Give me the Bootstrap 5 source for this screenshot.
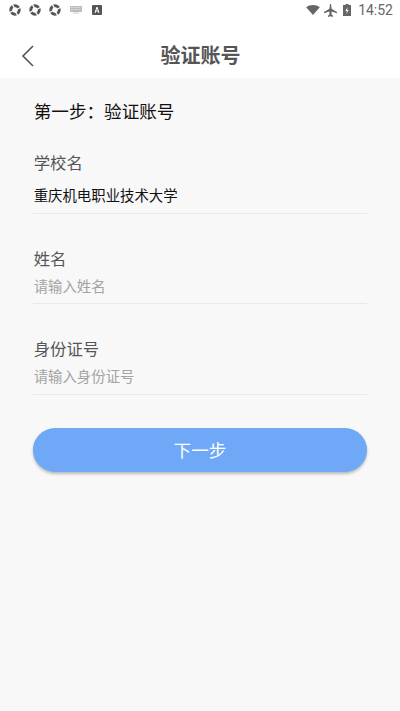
<!DOCTYPE html>
<html lang="zh"><head><meta charset="utf-8">
<link rel="stylesheet" href="https://cdn.jsdelivr.net/npm/bootstrap@5.3.0/dist/css/bootstrap.min.css">
<style>
html,body{height:100%}
body{background:#f8f8f8;font-family:"Noto Sans CJK SC","Liberation Sans",sans-serif;overflow:hidden}
.sbar{height:24px;background:#fff;padding:0 7px 4px 9px;color:#666}
.sbar svg{display:block}
.clock{font-family:Roboto,sans-serif;font-size:14px;color:#666;line-height:20px;margin-left:7px}
.ikey{margin-left:1px}
.iname{margin-left:2px}
.iair{margin-left:4px}
.ibat{margin-left:6px}
.tbar{height:54px;background:#fff}
.tbar h1{font-size:20px;font-weight:700;color:#555;margin:0;padding-left:1px;line-height:62px}
.backb{left:20px;top:19px;width:16px;height:26px}
.formwrap{padding:0 33px}
.steph{font-size:17.6px;color:#111;line-height:26px;padding-top:20px;margin:0 0 0 .7px}
.flabel{font-size:16.4px;color:#555;line-height:24px;display:block;margin:0 0 0 .7px}
.fval{font-size:14.4px;color:#111;line-height:20px;margin-left:.7px}
.fph{font-size:14.4px;color:#a3a3a3;line-height:20px;margin-left:.7px}
.frow{border-bottom:1px solid #e9e9e9}
.r1{margin-top:26px;padding-bottom:8px}
.r2{margin-top:32px;padding-bottom:7px}
.r3{margin-top:32px;padding-bottom:8px}
.nextb{margin-top:33px;height:44px;width:100%;border:0;border-radius:22px;background:#6fa8f7;color:#fff;font-size:17.6px;box-shadow:0 2px 3px rgba(0,0,0,.25)}
.nextb:hover,.nextb:active{background:#6fa8f7!important;color:#fff!important}
.lblgap{margin-bottom:11px}
.lblgap2{margin-bottom:6px}
</style></head>
<body>
<div class="sbar d-flex align-items-center justify-content-between">
  <div class="d-flex align-items-center" style="gap:8px">
    <svg width="12" height="12" viewBox="0 0 12 12"><circle cx="6" cy="6" r="4.200" fill="none" stroke="#555" stroke-width="3"/><path d="M3 0l2.500 4.200M12 3L7.800 5.500M9 12L6.500 7.800M0 9l4.200-2.500" stroke="#fff" stroke-width="1.300"/></svg>
    <svg width="12" height="12" viewBox="0 0 12 12"><circle cx="6" cy="6" r="4.200" fill="none" stroke="#555" stroke-width="3"/><path d="M3 0l2.500 4.200M12 3L7.800 5.500M9 12L6.500 7.800M0 9l4.200-2.500" stroke="#fff" stroke-width="1.300"/></svg>
    <svg width="12" height="12" viewBox="0 0 12 12"><circle cx="6" cy="6" r="4.200" fill="none" stroke="#555" stroke-width="3"/><path d="M3 0l2.500 4.200M12 3L7.800 5.500M9 12L6.500 7.800M0 9l4.200-2.500" stroke="#fff" stroke-width="1.300"/></svg>
    <svg class="ikey" width="12" height="8" viewBox="0 0 12 8"><rect width="12" height="6" fill="#bbb"/><path d="M1 1.500h10M1 3.500h10" stroke="#fff" stroke-width=".6" stroke-dasharray="1 .6"/><rect x="3" y="6.500" width="6" height="1" fill="#ccc"/></svg>
    <svg class="iname" width="10" height="10" viewBox="0 0 10 10"><rect width="10" height="10" rx="1" fill="#555"/><path d="M3 8l2-6 2 6M3.800 6h2.400" stroke="#fff" fill="none"/></svg>
  </div>
  <div class="d-flex align-items-center">
    <svg width="14" height="10" viewBox="0 0 15 11"><path d="M0 2.500C4-.8 11-.8 15 2.500L7.500 11z" fill="#666"/></svg>
    <svg class="iair" width="13" height="13" viewBox="0 0 13 13"><path d="M6 0h1l.6 4.800L13 8v1.200L7.600 7.600v3L9 11.800V13L6.500 12.200 4 13v-1.200l1.400-1.200v-3L0 9.200V8l5.400-3.200z" fill="#666"/></svg>
    <svg class="ibat" width="8" height="12" viewBox="0 0 8 12"><path d="M2.500 0h3v1H8v11H0V1h2.500z" fill="#666"/><path d="M4.600 3L2.400 7h1.500l-.5 3 2.200-4H4.100z" fill="#fff"/></svg>
    <span class="clock">14:52</span>
  </div>
</div>
<div class="tbar position-relative text-center">
  <svg class="backb position-absolute" viewBox="0 0 16 26"><path d="M13 3L3 13l10 10" fill="none" stroke="#555" stroke-width="1.600"/></svg>
  <h1>验证账号</h1>
</div>
<div class="formwrap">
  <p class="steph">第一步：验证账号</p>
  <div class="frow r1"><label class="flabel lblgap">学校名</label><div class="fval">重庆机电职业技术大学</div></div>
  <div class="frow r2"><label class="flabel lblgap2">姓名</label><div class="fph">请输入姓名</div></div>
  <div class="frow r3"><label class="flabel lblgap2">身份证号</label><div class="fph">请输入身份证号</div></div>
  <button type="button" class="btn nextb">下一步</button>
</div>
</body></html>
